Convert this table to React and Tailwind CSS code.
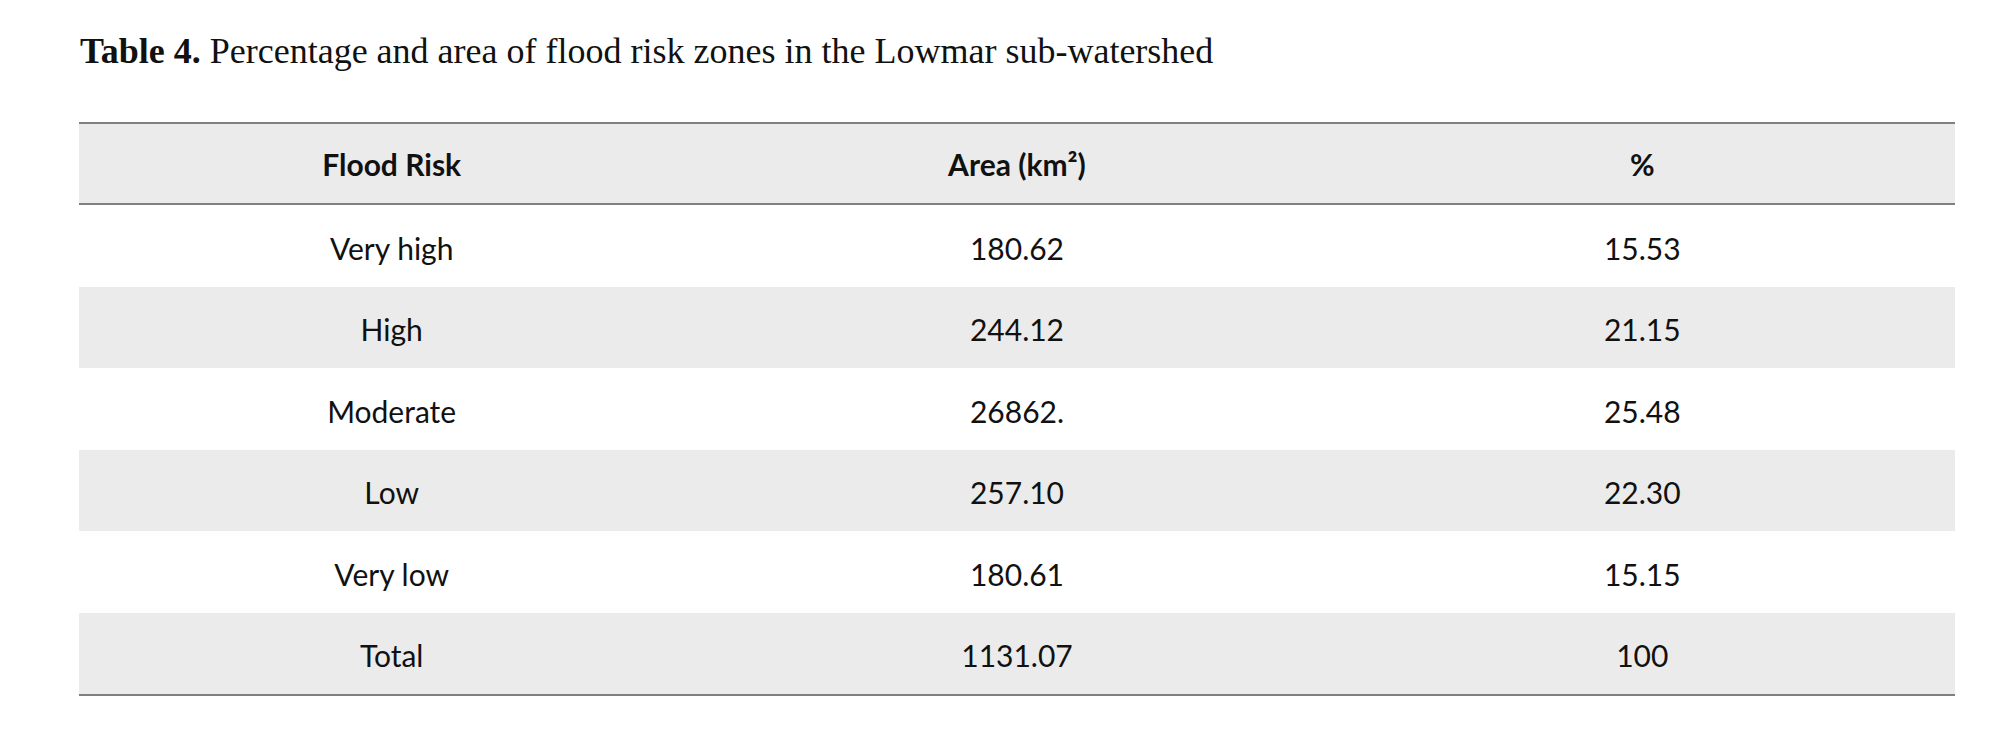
const rows = [
  ["Very high", "180.62", "15.53"],
  ["High", "244.12", "21.15"],
  ["Moderate", "26862.", "25.48"],
  ["Low", "257.10", "22.30"],
  ["Very low", "180.61", "15.15"],
  ["Total", "1131.07", "100"],
];

export default function App() {
  return (
    <div className="w-[2000px] h-[733px] bg-white pl-[79px] pr-[45px] pt-[33px] text-[#111]">
      <p className="font-['Liberation_Serif',serif] text-[36px] leading-[36px] pl-[1px]">
        <span className="font-bold">Table 4.</span> Percentage and area of flood risk zones in the Lowmar sub-watershed
      </p>

      <div className="mt-[53px] border-t-2 border-b-2 border-[#808080] font-['Lato',sans-serif] text-[30px]">
        <div className="grid grid-cols-3 h-[81px] items-center pt-[2px] bg-[#ebebeb] border-b-2 border-[#808080] font-bold">
          <div className="text-center">Flood Risk</div>
          <div className="text-center">Area (km²)</div>
          <div className="text-center">%</div>
        </div>
        {rows.map((r, i) => (
          <div
            key={r[0]}
            className={
              "grid grid-cols-3 h-[81.5px] items-center pt-[5px] " +
              (i % 2 === 1 ? "bg-[#ebebeb]" : "bg-white")
            }
          >
            <div className="text-center">{r[0]}</div>
            <div className="text-center">{r[1]}</div>
            <div className="text-center">{r[2]}</div>
          </div>
        ))}
      </div>
    </div>
  );
}
